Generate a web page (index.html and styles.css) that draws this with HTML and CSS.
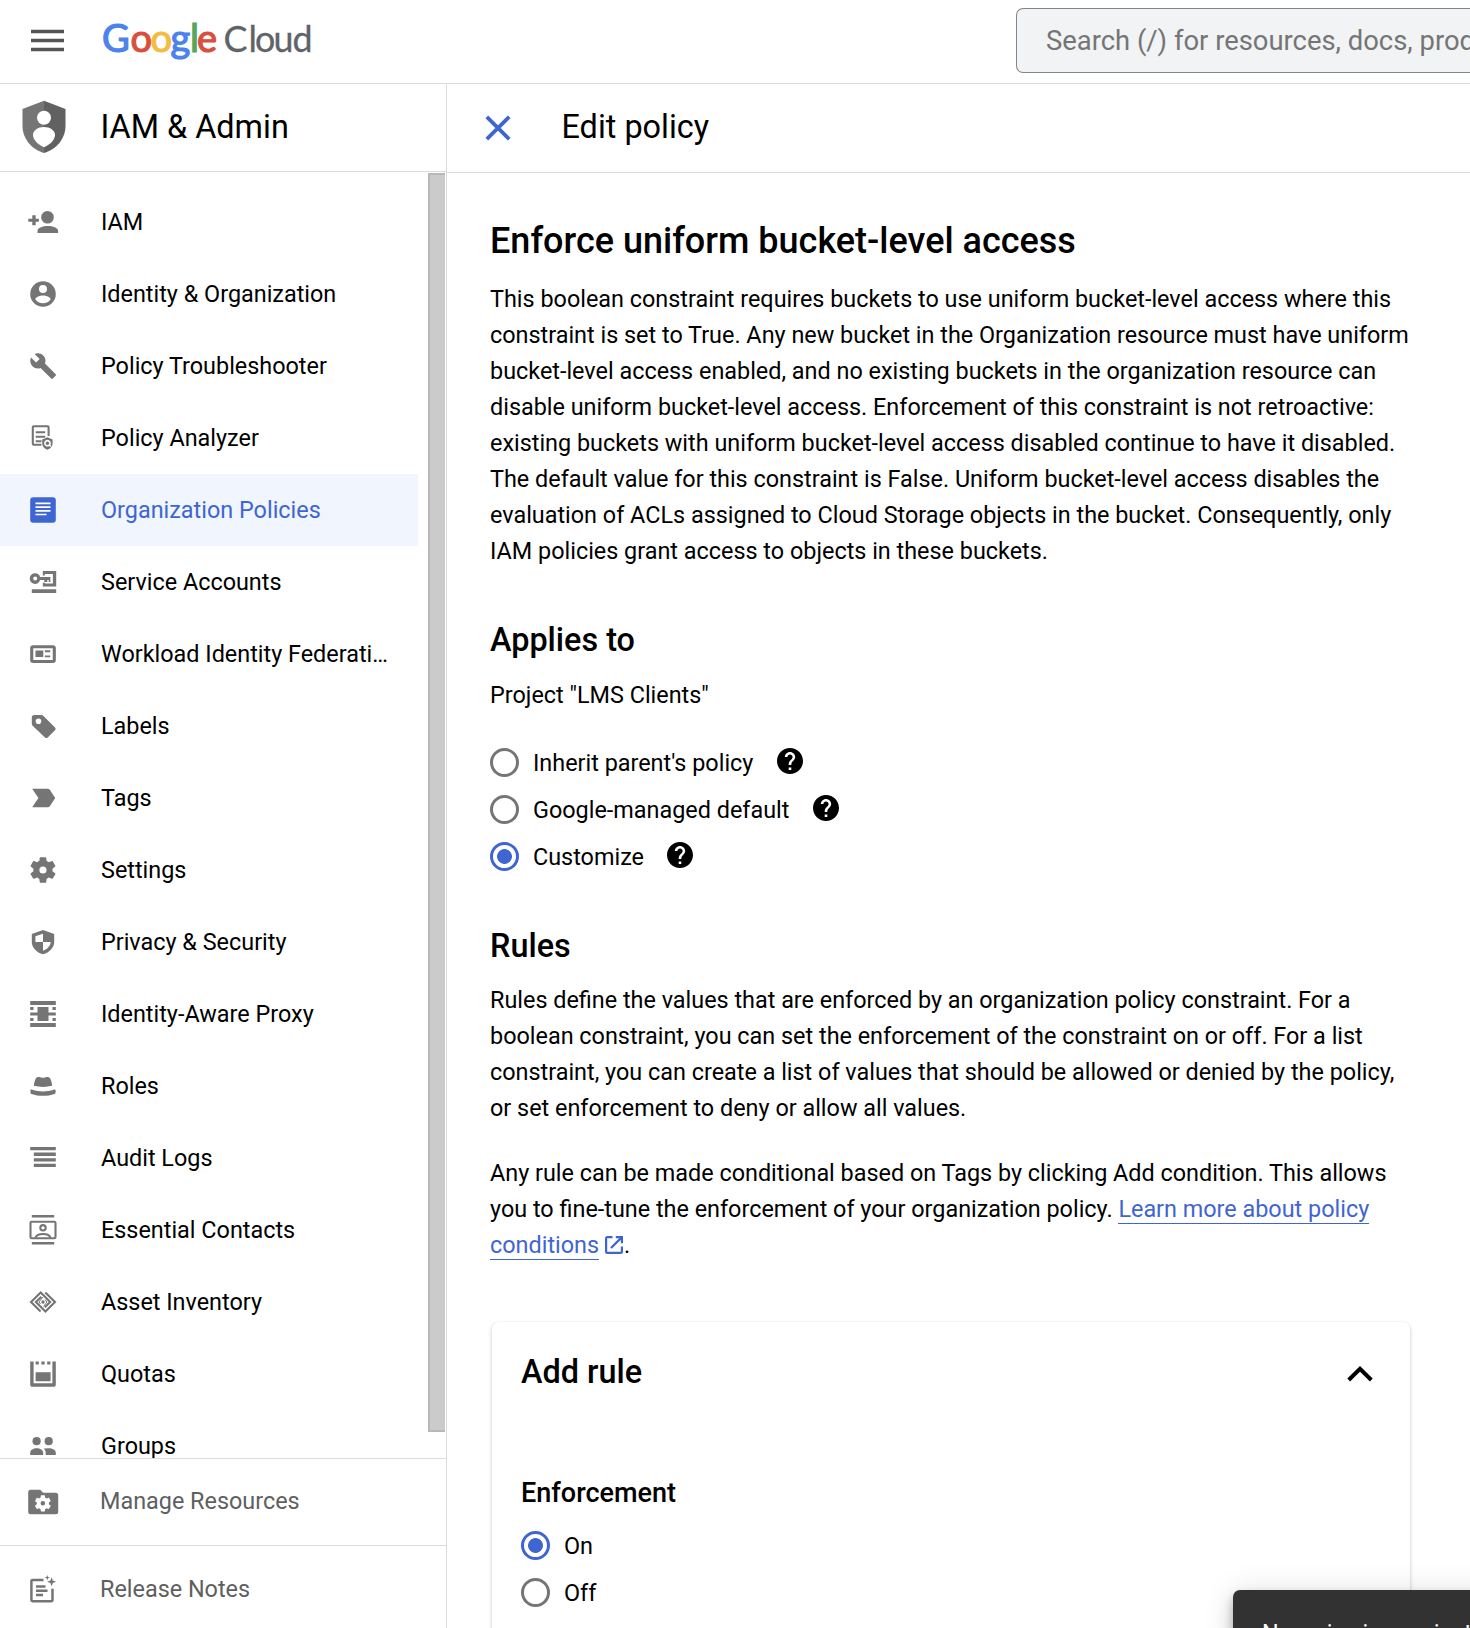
FILE: index.html
```html
<!DOCTYPE html>
<html lang="en">
<head>
<meta charset="utf-8">
<title>Edit policy – IAM &amp; Admin – Google Cloud</title>
<link rel="stylesheet" href="styles.css">
</head>
<body>
<header class="topbar">
  <svg class="menu" viewBox="0 0 34 26"><path d="M1 3.500h33M1 12.500h33M1 21.500h33"/></svg>
  <svg class="logo" viewBox="0 0 212 44">
    <text class="logo-google" y="36"><tspan class="g-blue" x="0">G</tspan><tspan class="g-red" x="28.500">o</tspan><tspan class="g-yellow" x="48.500">o</tspan><tspan class="g-blue" x="68.500">g</tspan><tspan class="g-green" x="88">l</tspan><tspan class="g-red" x="95">e</tspan></text>
    <text class="logo-cloud" y="36" x="121.500 146.500 153 171.500 190.500">Cloud</text>
  </svg>
  <div class="search"><span>Search (/) for resources, docs, products</span></div>
</header>
<div class="shell">
  <aside class="sidebar">
    <div class="product">
      <svg class="product-icon" viewBox="0 0 44 54"><path fill="#757575" d="M22 .7.500 9v17c0 12.500 9 23.500 21.500 27z"/><path fill="#616161" d="M22 .7 43.500 9v17c0 12.500-9 23.500-21.500 27z"/><circle fill="#fff" cx="22" cy="17.700" r="7"/><path fill="#fff" d="M22 27c6 0 11 3.500 11 8 0 5-5.500 10-11 12.300C16.500 45 11 40 11 35c0-4.500 5-8 11-8z"/></svg>
      <h2>IAM &amp; Admin</h2>
    </div>
    <div class="nav-wrap">
      <nav class="nav">
        <a class="item"><svg class="icon" viewBox="0 0 32 32"><circle cx="20.500" cy="11.300" r="6.300"/><path d="M10.500 27v-2.200c0-3 5.500-4.700 10.300-4.700s10.300 1.700 10.300 4.700V27zM5.300 9.200h3.400v3.600h3.200v3H8.700v3.500H5.300v-3.500h-4v-3h4z"/></svg><span>IAM</span></a>
        <a class="item"><svg class="icon" viewBox="0 0 32 32"><path fill-rule="evenodd" d="M16 3.200a12.800 12.800 0 1 0 0 25.600 12.800 12.800 0 0 0 0-25.600zM16 7a4 4 0 1 1 0 8 4 4 0 0 1 0-8zm0 18.300c-3.200 0-6-1.500-7.700-4 .1-2.500 5.200-3.900 7.700-3.900s7.600 1.400 7.700 3.900c-1.700 2.500-4.500 4-7.700 4z"/></svg><span>Identity &amp; Organization</span></a>
        <a class="item"><svg class="icon" viewBox="0 0 32 32"><path transform="translate(2.100 2) scale(1.170)" d="M22.700 19l-9.100-9.100c.9-2.300.4-5-1.500-6.900-2-2-5-2.400-7.400-1.300L9 6 6 9 1.600 4.700C.4 7.100.9 10.100 2.900 12.100c1.900 1.900 4.600 2.400 6.900 1.500l9.100 9.100c.4.4 1 .4 1.400 0l2.300-2.300c.5-.4.5-1.100.1-1.400z"/></svg><span>Policy Troubleshooter</span></a>
        <a class="item"><svg class="icon" viewBox="0 0 32 32"><g class="line"><path d="M21.600 14V5.200a1 1 0 0 0-1-1H6.800a1 1 0 0 0-1 1v16.600a1 1 0 0 0 1 1h7.600"/><path d="M8.700 10.200h9.500M8.700 14.700h9.500M8.700 19.200h5.800"/></g><path fill-rule="evenodd" d="M20.400 15.300l5.200 2.200v3.700c0 3-2.200 5.500-5.200 6.500-3-1-5.200-3.500-5.200-6.500v-3.700zm0 2.500a3.400 3.400 0 1 0 2 6.200l1.200 1 .8-1-1-1.100a3.400 3.400 0 0 0-3-5.100zm0 1.600a1.700 1.700 0 1 1 0 3.500 1.700 1.700 0 0 1 0-3.500z"/></svg><span>Policy Analyzer</span></a>
        <a class="item active"><svg class="icon" viewBox="0 0 32 32"><rect x="3.200" y="3.200" width="25.600" height="25.600" rx="3"/><path fill="none" stroke="#fff" stroke-width="1.700" d="M8.500 9.400h15M8.500 13.100h15M8.500 16.800h15M8.500 20.500h11"/></svg><span>Organization Policies</span></a>
        <a class="item"><svg class="icon" viewBox="0 0 32 32"><path fill-rule="evenodd" d="M8.200 7.300a5.300 5.300 0 0 1 4.900 3.600h10.300v5.100h-1.700v-1.900h-1.400v1.900h-3v-1.900h-4.200a5.300 5.300 0 1 1-4.900-6.800zm0 3.300a2 2 0 1 0 0 4 2 2 0 0 0 0-4z"/><path d="M15.800 4.900h13.400v15.500H15.800v-3.600h2v.7h8.100v-9.500h-8.100v1.400h-2zM4.800 23.300h24.400V27H4.800z"/></svg><span>Service Accounts</span></a>
        <a class="item"><svg class="icon" viewBox="0 0 32 32"><rect class="line thick" x="4.700" y="8.800" width="22.600" height="14.700" rx="1.500"/><path d="M8.500 12.600h7.800V19H8.500zM17.900 12.300h5.300v1.900h-5.300zM17.900 17.400h5.300v1.900h-5.300z"/></svg><span>Workload Identity Federati…</span></a>
        <a class="item"><svg class="icon" viewBox="0 0 32 32"><path fill-rule="evenodd" d="M4.800 7.500C4.800 6 5.800 5 7.300 5h6.900c.8 0 1.500.3 2 .8L28 17.500c.8.800.8 1.900 0 2.700l-7.300 7.300c-.8.800-1.900.8-2.700 0L5.600 15.700c-.5-.5-.8-1.200-.8-2zm6.700 1a2.800 2.800 0 1 0 0 5.600 2.800 2.800 0 0 0 0-5.600z"/></svg><span>Labels</span></a>
        <a class="item"><svg class="icon" viewBox="0 0 32 32"><path d="M5.200 6.700h15.600c.9 0 1.500.3 2 1l5.400 8.300-5.400 8.300c-.5.700-1.100 1-2 1H5.200l6.200-9.300z"/></svg><span>Tags</span></a>
        <a class="item"><svg class="icon" viewBox="0 0 32 32"><path id="gear" fill-rule="evenodd" transform="translate(.6 .6) scale(1.280)" d="M19.430 12.980c.04-.32.070-.64.070-.98s-.03-.66-.07-.98l2.110-1.650c.19-.15.240-.42.120-.64l-2-3.460c-.12-.22-.39-.3-.61-.22l-2.490 1c-.52-.4-1.080-.73-1.690-.98l-.38-2.650C14.460 2.180 14.250 2 14 2h-4c-.25 0-.46.180-.49.420l-.38 2.650c-.61.250-1.170.590-1.690.980l-2.490-1c-.23-.09-.49 0-.61.220l-2 3.460c-.13.220-.07.490.120.640l2.110 1.650c-.04.320-.07.650-.07.980s.03.660.070.980l-2.110 1.650c-.19.150-.24.420-.12.640l2 3.460c.12.220.390.300.610.220l2.490-1c.52.400 1.080.730 1.690.980l.38 2.650c.03.240.240.420.490.420h4c.25 0 .460-.18.490-.42l.38-2.650c.61-.25 1.170-.59 1.690-.98l2.490 1c.23.090.490 0 .610-.22l2-3.460c.12-.22.070-.49-.12-.64zM12 14.800a2.800 2.800 0 1 1 0-5.600 2.800 2.800 0 0 1 0 5.600z"/></svg><span>Settings</span></a>
        <a class="item"><svg class="icon" viewBox="0 0 32 32"><path fill-rule="evenodd" d="M16 3.900l11.200 4v8c0 5.500-4.700 10.600-11.200 12.300C9.500 26.500 4.800 21.400 4.800 15.900v-8zM16 7.700L8.400 10.200V16H16zM16 16v8.700c4.400-1.500 7.200-4.500 7.700-8.700z"/></svg><span>Privacy &amp; Security</span></a>
        <a class="item"><svg class="icon" viewBox="0 0 32 32"><path d="M3.200 3h25.600v3.900H3.200zM3.200 25h25.600v3.900H3.200zM10.500 9.100h11v14h-11zM3.200 14.400h25.600v3.200H3.200zM3.200 9.100h3.300v3H3.200zM25.500 9.100h3.300v3h-3.300zM3.200 19.900h3.300v3H3.200zM25.500 19.900h3.300v3h-3.300z"/></svg><span>Identity-Aware Proxy</span></a>
        <a class="item"><svg class="icon" viewBox="0 0 32 32"><path d="M9.500 7.500c1.500-1.300 3.700-.2 6.500.3 2.800-.5 5-1.600 6.500-.3 1.500 1.500 2.300 5 2.700 8.300-5.700 1.500-12.700 1.500-18.400 0 .4-3.300 1.200-6.800 2.700-8.300zM3.400 20.500c0-1 1-1.200 2-.8 6.500 2.300 14.700 2.300 21.200 0 1-.4 2-.2 2 .8v2c0 .7-.4 1.200-1.100 1.400-7 2.600-16 2.600-23 0-.7-.2-1.100-.7-1.100-1.400z"/></svg><span>Roles</span></a>
        <a class="item"><svg class="icon" viewBox="0 0 32 32"><path d="M3.200 5h25.600v3.300H3.200zM6.800 10.600h22v3.300h-22zM6.800 16.200h22v3.300h-22zM6.800 21.800h22v3.300h-22z"/></svg><span>Audit Logs</span></a>
        <a class="item"><svg class="icon" viewBox="0 0 32 32"><path d="M4.800 1h22.400v2.500H4.800zM4.800 28h22.400v2.500H4.800z"/><g class="line"><rect x="3.500" y="7.800" width="25" height="16.400" rx="1.200"/><circle cx="16" cy="13.800" r="2.700"/><path d="M8.500 23.800c1.500-5 13.500-5 15 0"/></g></svg><span>Essential Contacts</span></a>
        <a class="item"><svg class="icon" viewBox="0 0 32 32"><g class="line"><path d="M13.600 25.600L4 16l9.700-9.600 9.500 9.600-5.400 5.300M18.300 6.400L28 16l-9.600 9.600L8.900 16l5.400-5.300"/><path d="M16 11l-4 5 1.500 2M16.500 20.500l3.500-4.500-2-2.500" stroke-width="1"/></g><circle cx="16" cy="16" r="1.700"/></svg><span>Asset Inventory</span></a>
        <a class="item"><svg class="icon" viewBox="0 0 32 32"><path d="M3.200 3.400h3.400v21.900h18.800V3.400h3.400v23c0 1.400-.9 2.300-2.300 2.300h-21c-1.400 0-2.300-.9-2.300-2.300zM8.600 14.300h15v8.900h-15zM8.600 3.400h3.200v3.100H8.600zM14.400 3.400h3.200v3.100h-3.200zM20.200 3.400h3.200v3.100h-3.200z"/></svg><span>Quotas</span></a>
        <a class="item"><svg class="icon" viewBox="0 0 32 32"><circle cx="9.600" cy="11.200" r="4.100"/><circle cx="21.700" cy="11.200" r="4.100"/><path d="M3.200 25v-2.200c0-3 3.300-4.600 6.500-4.600s6.500 1.600 6.500 4.600V25zM18.700 25v-2.300c0-1.700-.8-3-2-4 1-.3 3-.5 5-.5 3.700 0 7.100 1.600 7.100 4.600V25z"/></svg><span>Groups</span></a>
      </nav>
      <div class="scrollbar"></div>
    </div>
    <a class="foot manage"><svg class="icon" viewBox="0 0 32 32"><path d="M1.200 6c0-1.300 1-2.300 2.300-2.300h9.700l3 3h12.700c1.300 0 2.300 1 2.300 2.300v17c0 1.300-1 2.300-2.300 2.300H3.500c-1.300 0-2.300-1-2.300-2.300z"/><g fill="#fff" transform="translate(5.800 7.300) scale(.63)"><use href="#gear"/></g></svg><span>Manage Resources</span></a>
    <a class="foot"><svg class="icon" viewBox="0 0 32 32"><g class="line mid"><path d="M16.500 6.900H5.600a1.200 1.200 0 0 0-1.200 1.200V27a1.200 1.200 0 0 0 1.200 1.200h18.700a1.200 1.200 0 0 0 1.200-1.200V15.700"/><path d="M9 13.500h9.500M9 17.700h11.500M9 22h7"/></g><path d="M24.600 4.300l1.200 3.300 3.300 1.200-3.300 1.200-1.200 3.300-1.200-3.300-3.300-1.200 3.300-1.200zM20.300 2l.7 1.900 1.900.7-1.900.7-.7 1.900-.7-1.900-1.900-.7 1.900-.7z"/></svg><span>Release Notes</span></a>
  </aside>
  <main class="main">
    <div class="page-head">
      <svg class="close" viewBox="0 0 26 26"><path d="M1.800 1.800l22.400 22.400M24.200 1.800L1.800 24.200"/></svg>
      <h1>Edit policy</h1>
    </div>
    <div class="content">
      <h2 class="title">Enforce uniform bucket-level access</h2>
      <p>This boolean constraint requires buckets to use uniform bucket-level access where this<br>constraint is set to True. Any new bucket in the Organization resource must have uniform<br>bucket-level access enabled, and no existing buckets in the organization resource can<br>disable uniform bucket-level access. Enforcement of this constraint is not retroactive:<br>existing buckets with uniform bucket-level access disabled continue to have it disabled.<br>The default value for this constraint is False. Uniform bucket-level access disables the<br>evaluation of ACLs assigned to Cloud Storage objects in the bucket. Consequently, only<br>IAM policies grant access to objects in these buckets.</p>
      <h3 class="applies">Applies to</h3>
      <p class="project">Project "LMS Clients"</p>
      <div class="radios">
        <label class="option"><i class="radio"></i><span>Inherit parent's policy</span><svg class="help" viewBox="2 2 20 20"><path d="M12 2C6.480 2 2 6.480 2 12s4.480 10 10 10 10-4.480 10-10S17.520 2 12 2zm1 17h-2v-2h2v2zm2.070-7.750l-.9.920C13.450 12.900 13 13.500 13 15h-2v-.5c0-1.100.450-2.100 1.170-2.830l1.240-1.260c.370-.36.590-.86.590-1.410 0-1.100-.9-2-2-2s-2 .9-2 2H8c0-2.210 1.790-4 4-4s4 1.790 4 4c0 .88-.36 1.680-.93 2.250z"/></svg></label>
        <label class="option"><i class="radio"></i><span>Google-managed default</span><svg class="help" viewBox="2 2 20 20"><path d="M12 2C6.480 2 2 6.480 2 12s4.480 10 10 10 10-4.480 10-10S17.520 2 12 2zm1 17h-2v-2h2v2zm2.070-7.750l-.9.920C13.450 12.900 13 13.500 13 15h-2v-.5c0-1.100.450-2.100 1.170-2.830l1.240-1.260c.370-.36.590-.86.590-1.410 0-1.100-.9-2-2-2s-2 .9-2 2H8c0-2.210 1.790-4 4-4s4 1.790 4 4c0 .88-.36 1.680-.93 2.250z"/></svg></label>
        <label class="option"><i class="radio on"></i><span>Customize</span><svg class="help" viewBox="2 2 20 20"><path d="M12 2C6.480 2 2 6.480 2 12s4.480 10 10 10 10-4.480 10-10S17.520 2 12 2zm1 17h-2v-2h2v2zm2.070-7.750l-.9.920C13.450 12.900 13 13.500 13 15h-2v-.5c0-1.100.450-2.100 1.170-2.830l1.240-1.260c.370-.36.590-.86.590-1.410 0-1.100-.9-2-2-2s-2 .9-2 2H8c0-2.210 1.790-4 4-4s4 1.790 4 4c0 .88-.36 1.680-.93 2.250z"/></svg></label>
      </div>
      <h3 class="rules">Rules</h3>
      <p>Rules define the values that are enforced by an organization policy constraint. For a<br>boolean constraint, you can set the enforcement of the constraint on or off. For a list<br>constraint, you can create a list of values that should be allowed or denied by the policy,<br>or set enforcement to deny or allow all values.</p>
      <p class="second">Any rule can be made conditional based on Tags by clicking Add condition. This allows<br>you to fine-tune the enforcement of your organization policy. <a class="link">Learn more about policy</a><br><a class="link">conditions</a><svg class="ext" viewBox="0 0 18 18"><path d="M7.500 1.100H2.200a1.100 1.100 0 0 0-1.100 1.100v13.600a1.100 1.100 0 0 0 1.100 1.100h13.600a1.100 1.100 0 0 0 1.100-1.100v-5.300M10.800 1.100h6.100v6.100M16.600 1.400L6 12"/></svg>.</p>
      <section class="card">
        <div class="card-head">
          <h3>Add rule</h3>
          <svg class="chevron" viewBox="0 0 26 16"><path d="M1.700 14L13 2.900 24.300 14"/></svg>
        </div>
        <h4>Enforcement</h4>
        <div class="radios">
          <label class="option"><i class="radio on"></i><span>On</span></label>
          <label class="option"><i class="radio"></i><span>Off</span></label>
        </div>
      </section>
    </div>
  </main>
</div>
<div class="toast">Now viewing project</div>
</body>
</html>
```
FILE: styles.css
```css
* { box-sizing: border-box; }

body {
  margin: 0;
  width: 1470px;
  height: 1628px;
  overflow: hidden;
  position: relative;
  background: #fff;
  color: #000;
  font: 400 23.4px/36px Roboto, sans-serif;
  letter-spacing: 0;
}

h1, h2, h3, h4, p { margin: 0; }
svg { display: block; flex: none; }

.topbar {
  display: flex;
  height: 84px;
  border-bottom: 1px solid #dadce0;
}
.menu { width: 34px; height: 26px; margin: 28px 0 0 30px; }
.menu path { stroke: #555; stroke-width: 3.5; fill: none; }
.logo { width: 212px; height: 44px; margin: 16px 0 0 38px; overflow: visible; }
.logo-google { font: 400 38px Lato, sans-serif; stroke-width: 1.2px; }
.logo-cloud { font: 400 35.8px Lato, sans-serif; fill: #5f6368; stroke: #5f6368; stroke-width: .3px; }
.g-blue { fill: #4c82ee; stroke: #4c82ee; }
.g-red { fill: #d94f3d; stroke: #d94f3d; }
.g-yellow { fill: #f2bd42; stroke: #f2bd42; }
.g-green { fill: #58a55c; stroke: #58a55c; }

.search {
  margin: 8px 0 0 auto;
  flex: none;
  width: 454px;
  height: 65px;
  padding-left: 29px;
  border: 1px solid #80868b;
  border-right: 0;
  border-radius: 7px 0 0 7px;
  background: #f1f3f4;
  color: #757575;
  font-size: 27.4px;
  line-height: 64px;
  white-space: nowrap;
  overflow: hidden;
}

.shell { display: flex; height: 1544px; }

.sidebar {
  width: 447px;
  flex: none;
  display: flex;
  flex-direction: column;
  border-right: 1px solid #dadce0;
}
.product {
  display: flex;
  height: 88px;
  flex: none;
  border-bottom: 1px solid #dadce0;
}
.product-icon { width: 44px; height: 54px; margin: 16px 0 0 21.5px; }
.product h2 { margin-left: 35px; font-weight: 400; font-size: 32.4px; line-height: 87px; }

.nav-wrap { display: flex; justify-content: space-between; height: 1286px; overflow: hidden; flex: none; }
.nav { width: 418px; padding-top: 14px; }
.item, .foot { display: flex; align-items: center; color: #000; white-space: nowrap; }
.item { height: 72px; padding-left: 27px; gap: 42px; }
.icon { width: 32px; height: 32px; fill: #757575; }
.line { fill: none; stroke: #757575; stroke-width: 2.1; }
.thick { stroke-width: 3.1; }
.mid { stroke-width: 2.5; }
.active { background: #f0f5fe; color: #3f65d2; }
.active .icon { fill: #3f65d2; }
.scrollbar {
  width: 17px;
  height: 1259px;
  margin: 1px 1px 0 0;
  background: #cbcbcb;
  border: 2px solid #b8b8b8;
  border-right: 0;
}
.foot {
  height: 87px;
  flex: none;
  padding-left: 27px;
  gap: 41px;
  color: #5f5f5f;
  border-top: 1px solid #dadce0;
}
.manage span { padding-bottom: 2px; }

.main { flex: 1; min-width: 0; }
.page-head {
  display: flex;
  height: 89px;
  border-bottom: 1px solid #dadce0;
}
.close { width: 26px; height: 26px; margin: 31px 0 0 37.5px; }
.close path { stroke: #3f65d2; stroke-width: 3.8; fill: none; }
.page-head h1 { margin-left: 51px; font-weight: 400; font-size: 32.4px; line-height: 87px; }

.content { padding: 44px 0 0 43px; white-space: nowrap; }
.title { font-weight: 500; font-size: 36px; line-height: 48px; margin-bottom: 16px; }
h3 { font-weight: 500; font-size: 32.4px; line-height: 44px; }
.applies { margin-top: 49px; }
.project { margin-top: 15px; }
.radios { display: flex; flex-direction: column; }
.option { display: flex; align-items: center; height: 47px; }
.radio {
  width: 29px;
  height: 29px;
  margin-right: 14px;
  border: 3px solid #757575;
  border-radius: 50%;
}
.on { border-color: #3f65d2; background: radial-gradient(circle, #3f65d2 7px, #fff 7.8px); }
.help { width: 26px; height: 26px; margin: 0 0 3px 23.5px; }
.content > .radios { margin-top: 26px; }
.rules { margin-top: 44px; }
.rules + p { margin-top: 14px; }
.second { margin-top: 29px; }
.link { color: #3f65d2; border-bottom: 1px solid #3f65d2; }
.ext { display: inline-block; width: 18px; height: 18px; margin: 0 1px 0 6px; vertical-align: -1px; }
.ext path { fill: none; stroke: #3f65d2; stroke-width: 2.2; }

.card {
  margin: 59px 0 0 2px;
  width: 918px;
  height: 330px;
  padding: 28px 37.5px 0 29px;
  border-radius: 7px;
  box-shadow: 0 2px 4px rgba(0, 0, 0, .2), 0 0 2px rgba(0, 0, 0, .06);
}
.card-head { display: flex; justify-content: space-between; }
.chevron { width: 26px; height: 16px; margin-top: 16px; }
.chevron path { fill: none; stroke: #000; stroke-width: 4; }
.card h4 { margin: 81px 0 11px; font-weight: 500; font-size: 27px; line-height: 36px; }

.toast {
  position: absolute;
  left: 1233px;
  top: 1590px;
  width: 260px;
  height: 90px;
  padding: 25px 0 0 29px;
  border-radius: 7px;
  background: #323232;
  color: #fff;
  white-space: nowrap;
  box-shadow: 0 5px 9px rgba(0, 0, 0, .2), 0 10px 18px rgba(0, 0, 0, .14), 0 2px 32px rgba(0, 0, 0, .12);
}
```
